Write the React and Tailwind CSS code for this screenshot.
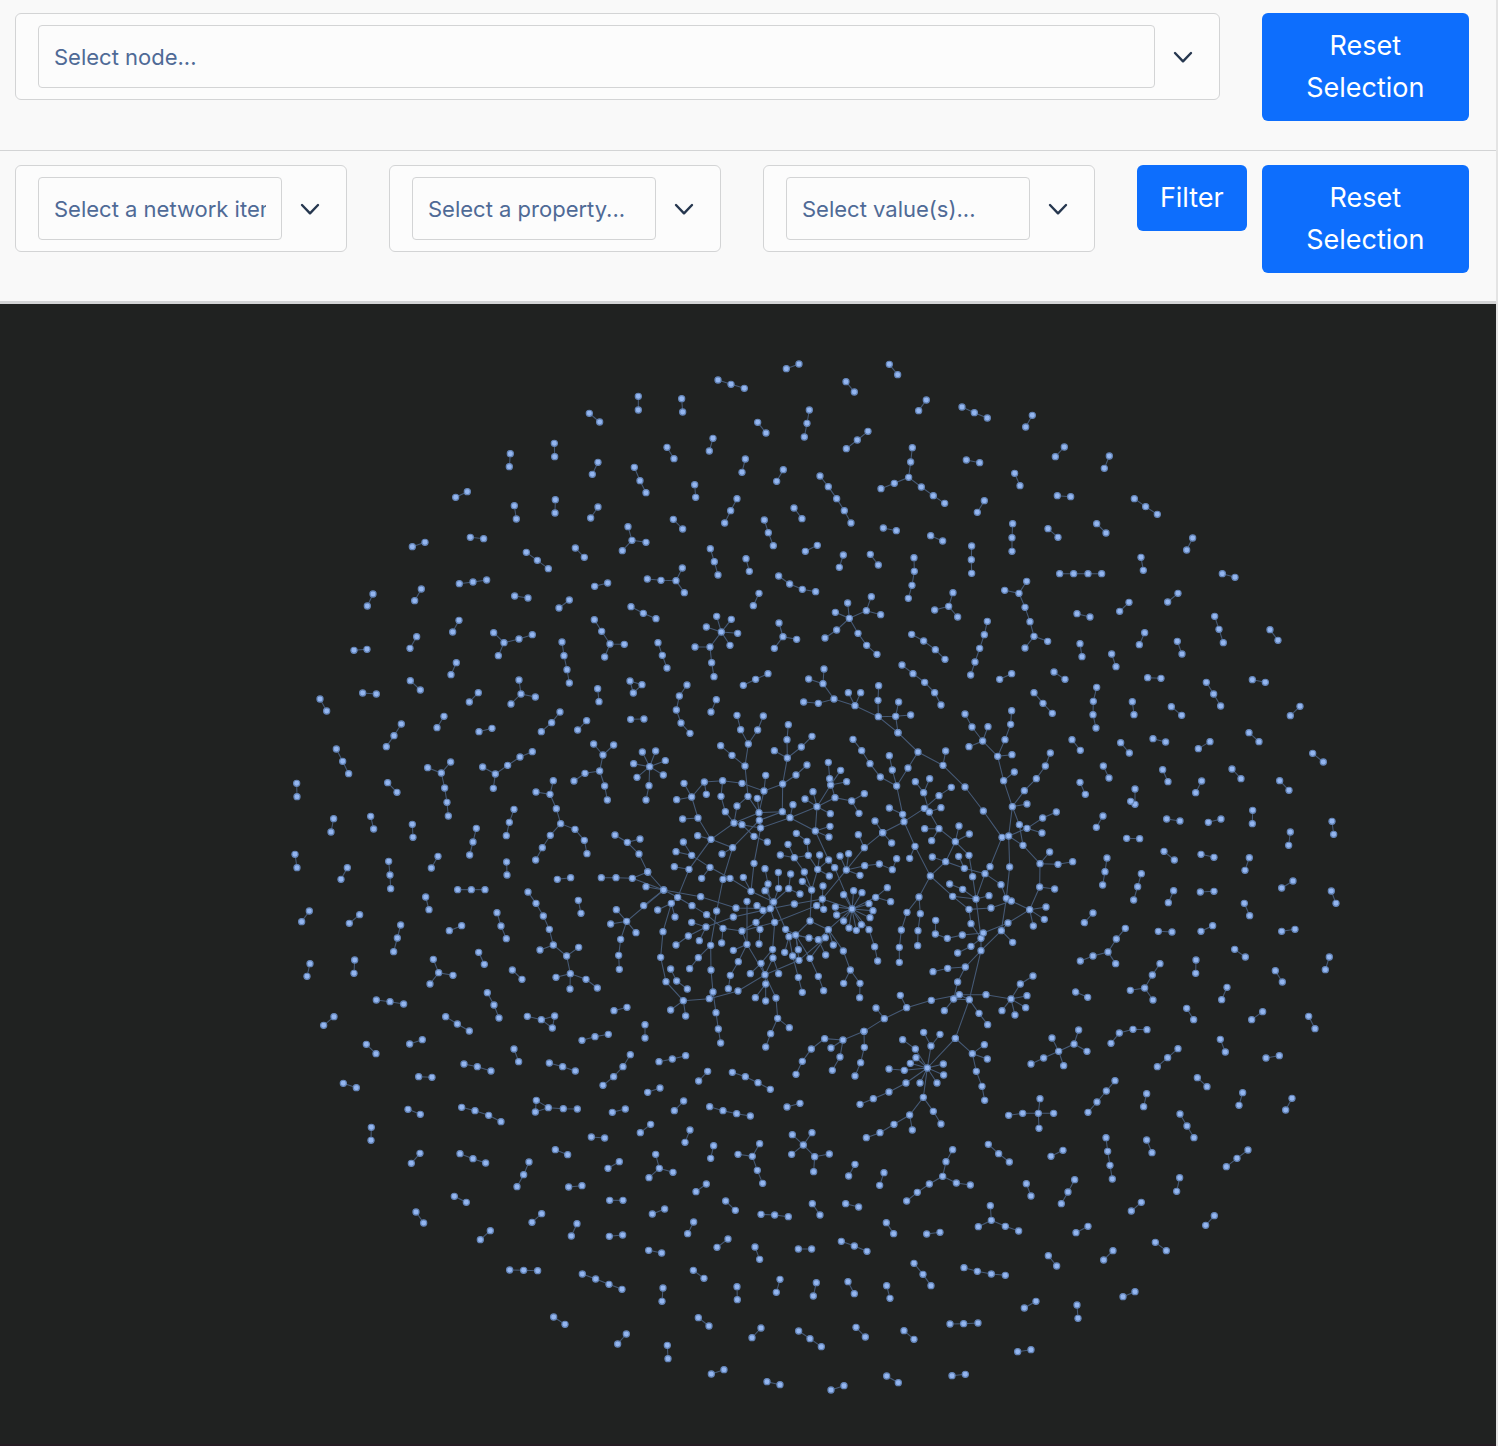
import React from "react";

// Each tile lists chains of linked nodes; coordinates are thirds of a pixel from the tile's origin.
const TILES = [
  {
    x: 280,
    y: 350,
    chains: `928,190 959,216|691,311 688,350|823,280 824,320|954,337 937,373|527,442 562,425|703,467 709,507|826,449 825,489|954,471 932,504|397,590 435,577|571,562 611,566|739,607 772,631 805,656|886,594 913,622|1044,530 1056,571 1027,602|1056,571 1098,577|538,701 579,696 620,690|279,732 262,768|424,717 404,752|704,738 744,744|944,709 983,699|868,750 837,774|1053,770 1090,790 1128,806|537,811 518,846|410,860 390,895|222,901 261,898|641,848 672,878 655,917|672,878 717,867 757,854|846,876 852,917 861,959 868,999|943,809 965,844 990,882 1033,883|990,882 974,921|529,938 513,974|391,992 421,1020|248,1029 289,1032|717,990 723,1032 766,1041|723,1032 693,1062|595,1028 568,1056|953,1016 957,1055|1050,993 1086,1004 1060,1029 1050,993|120,1047 140,1083|1075,139 1075,180|1063,352 1080,392 1098,428`,
  },
  {
    x: 640,
    y: 350,
    chains: `439,56 477,42|748,43 773,74|234,90 273,103 313,115|618,95 643,126|859,150 836,182|966,171 1003,188 1042,204|125,146 128,186|353,217 378,249|508,180 501,220 493,261|684,244 652,270 619,296|219,265 208,303|81,292 102,326|316,327 306,367|430,359 410,394|540,378 565,410 590,446 613,482 633,519|817,293 812,336 806,382 763,400 723,416|806,382 844,411 880,437 914,460|979,330 1019,338|164,404 167,442|291,446 272,482 254,519|462,474 486,506|1033,452 1012,487|100,508 128,537|373,510 385,548 400,587|730,534 769,542|872,557 908,573|995,588 994,629 995,670|211,596 223,635 234,675|318,626 328,664|532,586 496,604|610,615 598,652|691,613 715,645|822,623 823,664 816,706 805,745|22,687 63,691 108,692 127,654|108,692 133,728|416,678 449,702 487,718 527,725|357,730 340,767|230,799 244,846 274,808|199,831 244,846 293,850|270,886 244,846 210,891 165,891|210,891 215,938 222,980|623,759 628,805 586,787|628,805 679,782 694,740|679,782 722,794|628,805 590,840 555,864|628,805 654,850 680,886 711,913|417,819 429,860 470,868|429,860 403,895|939,728 926,769 884,780|926,769 953,801|815,853 851,873 886,899 915,928|786,945 819,971 854,997 884,1028 903,1065|1042,814 1033,854 1019,895 1005,936 992,975|54,878 67,916 81,954|310,1006 347,988 384,971|141,1005 118,1038 109,1080 123,1119 150,1150|229,1049 213,1086|552,957 549,1001 506,987|549,1001 582,1047|491,1056 535,1060 582,1047 645,1067 715,1100 767,1099 812,1095|625,1028 645,1067 662,1028|716,1007 714,1051 715,1100 774,1148|776,1056 767,1099 774,1148`,
  },
  {
    x: 1000,
    y: 350,
    chains: `97,196 77,231|193,291 166,320|328,318 313,355|44,370 60,407|172,437 212,440|403,446 437,470 472,493|290,521 318,549|38,521 36,563 36,604|144,536 174,562|578,564 560,600|423,622 430,661|179,671 221,671 264,671 305,671|667,671 705,682|80,694 57,730 14,721|57,730 75,772 90,815 102,859 143,874|102,859 75,894|534,730 503,756|387,757 359,784|231,791 270,801|644,799 657,838 670,878|810,839 834,871|434,848 418,884|532,874 546,912|240,881 246,920|335,912 348,950|-1,988 35,971|162,966 195,988|443,983 483,985|757,989 796,997|619,997 641,1032 662,1068|290,1012 280,1054 279,1094 288,1134|102,1028 129,1060 157,1090|397,1055 402,1094`,
  },
  {
    x: 280,
    y: 700,
    chains: `492,49 471,83|364,72 342,107 319,140|597,95 636,85|840,36 815,68 784,95|920,62 893,90|1052,58 1092,57|169,147 188,184 206,221|50,250 51,290|323,248 351,277|443,203 484,219 512,186|484,219 494,264 501,307 505,348|608,201 646,222 683,196 720,171 757,155|646,222 640,265|941,132 969,165 1001,135|969,165 959,213 915,220 882,243|959,213 974,258 982,300|820,242 810,283 768,276|810,283 829,326 842,371 885,388 913,421 921,461|842,371 811,406 787,443 767,480|702,328 688,367 679,407|161,356 153,396|272,349 281,387|397,373 399,412|589,385 579,426 569,465|1005,405 1042,427 1080,417|1042,427 1077,462 1103,516|45,463 51,503|202,503 183,538|326,484 330,525 332,566|474,469 454,504|680,486 681,525|832,538 872,533|964,533 1008,533 1057,535 1103,516|1057,535 1151,570|533,569 574,569 615,569|437,591 447,629|744,576 768,610 790,648 808,688 820,735 860,768 871,821 918,838 952,864|820,735 780,750|860,768 896,742|828,832 871,821 870,867|895,601 903,640|88,633 65,665|239,644 208,670|362,675 352,714 341,755|508,692 545,677|651,638 663,678 679,716|596,757 613,793|1009,629 1040,664 992,672|1151,570 1040,664 1068,698|1040,664 1022,718 1016,766 1018,808|90,791 81,829|224,780 222,820|460,778 476,818 519,826|476,818 450,852|697,810 726,838|289,900 330,905 371,912|622,878 642,915 657,954|742,949 784,959 824,948 817,984 784,959|162,950 131,976|497,950 532,972 568,993|1002,932 1041,922|389,1032 427,1019|906,1021 945,1010 985,1003|259,1033 288,1061|702,1047 716,1085`,
  },
  {
    x: 640,
    y: 700,
    chains: `7,156 29,200 47,153|76,182 29,200 70,225|-19,191 29,200 -9,232|29,200 27,257 18,300|242,137 276,166 315,198 325,132 302,89 291,46|325,132 353,90 370,48|315,198 324,289 357,338|445,74 441,119 442,174 484,141 516,109|403,152 442,174 428,252 468,225 501,195|132,250 155,291 193,246 248,242 306,250 372,273 428,252 427,335 357,338|155,291 110,299|193,246 199,283|248,242 243,289 256,335 282,369|377,226 372,273 357,338|352,295 357,338|155,291 174,354 128,357|174,354 213,418 173,407|213,418 282,369 357,338|213,418 278,443 246,462|278,443 358,361 427,335 450,353 459,314|324,289 291,318 282,369 306,374 362,384 450,353 531,320|306,374 342,409 382,426|450,353 526,393|357,338 358,361 362,384 342,490 333,574|495,297 531,320 519,275|571,341 531,320 585,293 635,303 673,281|635,303 657,340|531,320 572,255 569,236 565,187|602,211 572,255 620,245|569,236 585,293|531,320 526,393 570,379|567,411 526,393 566,480|619,510 673,443 728,398 705,363|673,443 655,404|600,468 619,510 626,461|619,510 674,497 718,492 757,509 770,476|660,526 619,510 547,597|130,426 155,466 108,455|155,466 210,502 185,535|103,500 147,508 113,592|213,418 147,508|210,502 270,535 333,574|278,443 249,538 230,633 212,736 213,810 219,876 228,938 235,987 242,1029|249,538 270,535|23,516 71,570 18,560|71,570 11,617|71,570 113,592|71,570 182,590 288,624 391,626|113,592 94,610 53,630|94,610 105,651|94,610 69,695 62,772 78,845 130,902 208,896 294,873 375,824 477,781 556,713|113,592 156,617 200,644 249,685 306,693|155,667 198,681 145,708 108,735|178,722 198,681 280,651 391,626|249,685 245,729|92,930 130,902 137,948|208,896 219,876|92,807 110,843 142,867|212,736 175,773 149,806|310,532 333,574 401,606|391,626 384,552 375,506|375,572 401,606 416,565 415,517|401,606 446,566 452,522|391,626 463,612 547,597|446,566 480,582|401,606 391,626 351,617|391,626 369,631|391,626 348,667 306,693|391,626 404,667 398,748 363,790 331,821|401,606 437,688 467,705|321,604 321,733 280,751|321,733 295,785 271,826 265,866|306,693 321,733 375,824|348,667 360,688 357,732|404,667 306,693|398,748 399,774 416,821|399,774 375,824 377,852 346,893|377,903 377,852|375,824 408,894 413,955 448,983|413,955 392,1001 377,1041|363,790 375,824|404,667 530,617 547,597 551,628|530,617 551,628|547,597 549,558|487,544 515,570 493,516 463,473 421,465|444,433 463,473 505,466|515,570 510,663|515,570 533,508 505,466 501,424 469,400|539,465 533,508 566,480 584,503 636,627|533,508 568,528|510,663 467,705 447,710 437,688|510,663 565,689 535,719 467,705|507,714 467,705 475,749|467,705 510,775 535,829 551,872|447,710 434,757|447,710 458,768 475,832 487,877|467,705 477,781|458,768 477,781|510,775 556,713 565,689|535,719 557,765|565,689 580,735|565,689 610,753 631,810 611,850|631,810 660,850 659,893|611,584 636,627 641,572|666,578 636,627 707,592 742,563|707,592 752,605|687,611 636,627 699,632|690,653 636,627 664,674|649,691 636,627 627,684|611,663 636,627 590,645|586,621 636,627 565,689|547,597 636,627 687,689 704,740 713,783|15,974 15,1014|672,994 609,1020 554,1016 514,1047 487,1084 468,1123|573,1044 609,1020 600,1071 577,1111|672,994 673,1042 662,1088 645,1128`,
  },
  {
    x: 860,
    y: 700,
    chains: `-21,118 5,152 30,191 61,231 110,258|114,98 174,156 249,196 257,153|249,196 315,261 370,333 426,412 446,408|174,156 144,204 110,258 97,210 88,167|110,258 128,343 132,365 165,439 149,475|88,324 128,343|132,365 68,398 95,429|132,365 193,325 237,287 274,262|193,325 208,336 243,323|208,336 237,386 194,386|215,422 237,386 286,425 297,378|328,402 286,425 257,485 217,471|286,425 327,466 338,530 348,597|208,336 191,278 166,245|191,278 209,236|165,439 211,528 257,485 313,505 375,521 423,554 439,595|296,469 313,505|211,528 278,589 348,597 387,587|348,597 308,568 269,552|211,528 177,591 141,637 124,690 118,742 118,787|177,591 181,641 174,692 173,737|278,589 327,628 393,624 454,603|327,628 333,671 363,715|348,597 375,521 390,500 426,412|348,597 363,715|315,42 336,81 368,123 413,169 435,119 452,73 455,32|384,80 368,123 327,140|456,164 413,169 431,242 463,216|431,242 457,320 493,272 529,236 556,198 571,159|501,312 457,320 446,408 501,385 548,354 589,336|501,385 546,399|457,320 478,374 489,436 540,491 569,456|540,491 594,493 638,485|478,374 501,385|489,436 446,408 449,501 439,595 454,603 509,629 558,621|553,658 509,629 520,678|540,491 539,561 584,567|539,561 509,629 444,669 370,699 307,705 262,715 226,702 227,661|439,595 424,692 458,727|444,669 424,692 363,752 316,801 263,805 219,815|370,699 363,715 333,739 293,759|363,715 363,752 328,899 286,1015|316,801 293,846 281,897 253,932|298,884 281,897 328,899 357,940 383,974|298,884 378,884 453,897 481,852 519,828|328,899 298,884|501,887 453,897 497,923|465,945 453,897 426,932|298,884 214,901 140,923 73,956 12,994|140,923 121,886|73,956 48,924`,
  },
  {
    x: 1080,
    y: 700,
    chains: `274,20 305,46|660,19 631,47|-24,119 1,151|122,128 148,159|219,116 257,126|390,125 355,146|507,98 537,125|698,160 730,186|70,198 87,234|0,247 16,283|248,209 264,245|456,207 483,236|365,243 347,278|599,242 627,271|165,267 165,313 152,304|69,348 49,382|260,357 300,363|423,357 385,367|518,331 517,371|756,364 761,403|140,415 179,416|631,396 626,436|252,454 283,480|363,463 402,472|81,474 75,515 68,555|508,473 495,511|184,521 173,560 161,600|639,543 605,564|281,572 265,608|361,576 402,574|754,573 768,610|493,610 509,647|39,639 13,668|136,685 109,717 84,756 39,768 1,783|84,756 107,791|235,694 276,696|398,677 363,694|605,694 645,688|464,748 496,771|348,780 347,820|748,771 736,809|240,791 217,825 194,864 151,871|194,864 219,900|586,812 607,846|-13,876 23,892|441,862 425,899|320,925 341,959|548,935 515,959|201,989 159,988 118,999 93,1030|686,949 705,986|421,1018 436,1056`,
  },
  {
    x: 280,
    y: 1040,
    chains: `552,72 592,80 633,93|416,110 456,112|190,130 229,143|808,69 848,80 886,93|1051,44 1029,80 1001,110 969,136|384,208 421,223|545,202 585,212 626,226 663,245|769,181 805,203 766,216 769,181|805,203 850,206 892,207|997,217 1036,207|274,262 273,301|934,291 974,294|1081,278 1112,253|420,340 394,370|540,341 579,356 617,369|826,329 863,344|747,366 731,404 711,440|1018,365 984,385|866,441 906,437|989,481 1029,481|523,469 559,487|408,516 431,549|785,521 756,547|891,551 874,588|631,572 601,599|988,589 1028,585|689,690 731,691 773,692|907,702 947,717 987,733 1026,748|821,831 855,853|1039,882 1013,912`,
  },
  {
    x: 640,
    y: 1040,
    chains: `57,65 97,57 137,47|203,94 176,123|277,97 316,110 354,128 391,148|23,157 60,144|131,183 103,212|209,200 249,212 290,221 331,228|441,201 480,190|150,270 135,307|221,317 212,355|47,343 58,385 99,397|58,385 27,413|294,343 337,349 359,311|337,349 352,391 368,430|457,284 490,315 516,278|455,343 490,315 524,350 568,342|524,350 521,395|645,373 626,408|732,398 719,436|199,432 168,455|938,329 918,365 908,409 868,432 832,457 800,483|908,409 949,429 991,435|1045,313 1076,341 1108,366|257,483 286,511|363,523 404,525 445,530|517,491 540,525|617,491 656,501|37,522 74,507|161,546 143,581|739,548 761,581|860,582 900,577|1051,497 1054,541 1015,560|1054,541 1096,559 1136,573|264,597 231,622|345,621 359,658|475,627 515,627|604,604 643,618 681,634|26,631 65,639|160,691 192,715|822,670 849,703 873,737|972,683 1012,694 1054,702 1096,706|69,744 66,784|291,740 292,779|420,718 409,757|529,728 520,768|624,725 643,761|740,737 750,775|175,833 207,858|363,864 336,893|476,873 510,896 544,920|648,862 676,891|792,872 822,898|930,852 971,851 1014,849|82,916 84,956|214,1002 252,989|381,1025 420,1034|573,1050 612,1037|740,1008 775,1028|936,1007 976,1003|862,84 946,-5 997,41 1033,14|1042,57 997,41 1009,94 1026,139 1034,181|862,84 873,18 851,-23|873,18 900,-17|862,84 826,27 788,-1|828,53 862,84 811,70|862,84 793,91 747,87|910,72 862,84 911,105|891,129 862,84 840,129|862,84 798,129 747,156 700,176 660,193|862,84 850,172 809,225 762,253 720,278 679,293|809,225 817,270|850,172 880,214 903,252`,
  },
  {
    x: 1000,
    y: 1040,
    chains: `156,-6 176,34 222,12 236,-30|222,12 261,34|176,34 131,54 93,72|176,34 191,77|534,26 503,53 472,80|798,54 838,47|592,113 621,140|345,122 319,153 291,186 264,217|440,161 431,200|728,158 717,196|876,175 857,210|26,226 68,220 115,220 161,220|120,176 115,220 117,265|540,222 561,258 582,293|440,300 456,338|318,293 323,334 330,376 337,417|153,349 189,331|744,330 711,355 679,380|79,431 93,468|224,419 204,456 184,491|539,413 530,454|424,487 394,513|643,527 617,556|264,559 228,578|466,607 499,632|339,632 311,660|145,647 170,678|405,755 369,770|108,784 73,804|231,795 234,835|53,935 93,929`,
  },
];

const chainsOf = (tile) => tile.chains.split("|").map((chain) => chain.split(" "));

function Network() {
  return (
    <svg viewBox="0 304 1496 1140" className="block h-auto w-full" role="img" aria-label="Network graph">
      {TILES.map((tile) => (
        <g
          key={`links-${tile.x}-${tile.y}`}
          transform={`translate(${tile.x} ${tile.y}) scale(0.33333)`}
          fill="none"
          stroke="#465a76"
          strokeWidth="3.2"
        >
          {chainsOf(tile).map((points, i) => (
            <polyline key={i} points={points.join(" ")} />
          ))}
        </g>
      ))}
      {TILES.map((tile) => (
        <g
          key={`nodes-${tile.x}-${tile.y}`}
          transform={`translate(${tile.x} ${tile.y}) scale(0.33333)`}
          fill="#94b6f0"
          stroke="#6485b8"
          strokeWidth="3.6"
        >
          {[...new Set(chainsOf(tile).flat())].map((point) => {
            const [cx, cy] = point.split(",");
            return <circle key={point} cx={cx} cy={cy} r="9.2" />;
          })}
        </g>
      ))}
    </svg>
  );
}

function Picker({ label }) {
  return (
    <div className="flex items-center rounded-md border border-[#d3d4d5] bg-[#fcfcfc] py-[11px] pr-2 pl-[22px]">
      <input
        type="text"
        aria-label={label}
        placeholder={label}
        className="h-[63px] min-w-0 flex-1 rounded border border-[#d3d4d5] bg-[#fcfcfc] px-[15px] text-[22px] text-[#283850] outline-none placeholder:text-[#4f6a96]"
      />
      <button type="button" aria-label={`${label} options`} className="flex h-[63px] w-14 items-center justify-center">
        <svg width="20" height="12" viewBox="0 0 20 12" fill="none" stroke="#26374f" strokeWidth="2.4" strokeLinecap="round" strokeLinejoin="round">
          <path d="M2 2 10 10.3 18 2" />
        </svg>
      </button>
    </div>
  );
}

function ActionButton({ children }) {
  return (
    <button type="button" className="w-full rounded-md bg-[#0d6efd] px-5 py-3 text-[27px] leading-[42px] text-white">
      {children}
    </button>
  );
}

export default function App() {
  return (
    <div className="min-h-screen border-r-2 border-[#e4e4e4] bg-[#f9f9f9] font-['Inter',sans-serif]">
      <div className="grid grid-cols-12 items-start border-b border-[#d3d4d5] pt-[13px] pb-[29px]">
        <div className="col-span-10 pr-[27px] pl-[15px]">
          <Picker label="Select node..." />
        </div>
        <div className="col-span-2 pr-[27px] pl-[15px]">
          <ActionButton>Reset Selection</ActionButton>
        </div>
      </div>
      <div className="grid grid-cols-12 items-start border-b-[3px] border-[#d3d4d5] pt-[14px] pb-[28px]">
        <div className="col-span-3 pr-[27px] pl-[15px]">
          <Picker label="Select a network item..." />
        </div>
        <div className="col-span-3 pr-[27px] pl-[15px]">
          <Picker label="Select a property..." />
        </div>
        <div className="col-span-3 pr-[27px] pl-[15px]">
          <Picker label="Select value(s)..." />
        </div>
        <div className="col-span-1 pl-[15px]">
          <ActionButton>Filter</ActionButton>
        </div>
        <div className="col-span-2 pr-[27px] pl-[15px]">
          <ActionButton>Reset Selection</ActionButton>
        </div>
      </div>
      <div className="border-b-2 border-[#241c22] bg-[#202221]">
        <Network />
      </div>
    </div>
  );
}
